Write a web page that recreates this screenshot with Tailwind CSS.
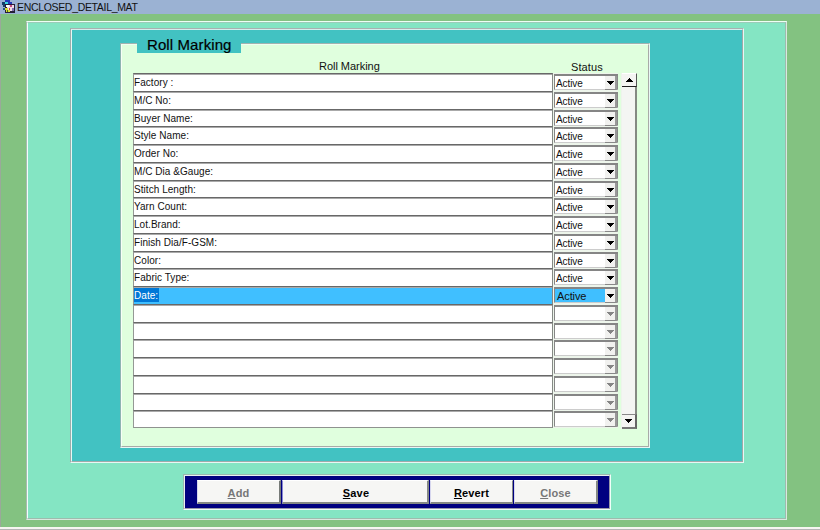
<!DOCTYPE html>
<html lang="en">
<head>
<meta charset="utf-8">
<title>ENCLOSED_DETAIL_MAT</title>
<script src="https://cdn.jsdelivr.net/npm/@tailwindcss/browser@4"></script>
</head>
<body class="w-[820px] h-[530px] overflow-hidden flex flex-col bg-[#f4f4f0] font-['Liberation_Sans',Arial,sans-serif] text-[#111]">
<header class="h-[14px] shrink-0 bg-[#9bb2d3] flex items-center">
  <svg class="w-[14px] h-[14px] ml-[2px] shrink-0" viewBox="0 0 14 14" shape-rendering="crispEdges">
    <path d="M3 0h5v2h2v2H3z" fill="#2438b8"/><path d="M0 2h3v5H1V5H0z" fill="#143c68"/><path d="M3 2h3v2H3z" fill="#38d8e0"/>
    <path d="M3 4h10v9H3z" fill="#251e37"/><path d="M5 5h7v6H5z" fill="#f0dce7"/>
    <path d="M4 5h3v2H4z" fill="#fff"/><path d="M8 5h2v2H8z" fill="#c14b83"/><path d="M10 8h2v3h-2z" fill="#8270b3"/>
    <path d="M3 8h3v2h2v2H4v-2H3z" fill="#d4df35"/><path d="M7 8h1v2H7z" fill="#d34437"/><path d="M1 8h2v2H1z" fill="#244f86"/><path d="M5 10h1v2H5z" fill="#4f681c"/>
  </svg>
  <span class="ml-[1px] text-[10.5px] leading-[14px] tracking-[-0.33px] whitespace-nowrap">ENCLOSED_DETAIL_MAT</span>
</header>
<main class="h-[513px] shrink-0 bg-[#83c281] border-l border-l-[#9aa99a] pl-[25px] pt-[7px]">
  <section class="w-[761px] h-[499px] border border-t-[#eefff5] border-l-[#a9b9b1] border-r-[#d9e8df] border-b-[#d9e8df]">
    <div class="h-full bg-[#84e5c3] border-l border-l-[#f2fff9] border-r border-r-[#9dbcae] border-b border-b-[#9dbcae] border-t border-t-[#9ccbb8] pl-[42px] pt-[5px]">
      <section class="w-[674px] h-[435px] border border-t-[#a9b1b0] border-l-[#9cacab] border-r-[#e8f8f4] border-b-[#e8f8f4]">
        <div class="h-full bg-[#42c2c2] border border-t-[#d5efed] border-l-[#e8f8f4] border-r-[#a1aaa9] border-b-[#a1aaa9] pl-[48px] pt-[6px]">
          <div class="h-[7px] relative z-10 pl-[17px]">
            <h1 class="w-[104px] h-[17px] bg-[#42c2c2] pl-[10px] text-[15px] leading-[18px] text-black tracking-[0.1px] whitespace-nowrap [-webkit-text-stroke:0.2px_black]">Roll Marking</h1>
          </div>
          <section class="w-[530px] h-[405px] border border-t-[#a2b2af] border-l-[#8eb5b1] border-r-[#e8f8f4] border-b-[#e8f8f4]">
            <div class="h-full bg-[#e0ffde] border border-t-[#effff0] border-l-[#f7fff7] border-r-[#a9aaa8] border-b-[#a9aaa8] pl-[11px]">
              <div class="h-[28px] flex pt-[15px] text-[11px] leading-[13px]">
                <div class="w-[420px] pl-[186px] tracking-[-0.03px] whitespace-nowrap">Roll Marking</div>
                <div class="pl-[18px] pt-px tracking-[0.1px]">Status</div>
              </div>
              <div class="flex h-[356px]">
                <div id="rows" class="w-[485px] shrink-0"></div>
                <div class="ml-[3px] w-[16px] h-[356px] flex flex-col bg-[#f4f5f3] border-r-2 border-r-[#858983] border-l border-l-[#eef3ec]">
                  <div class="h-[14px] mr-[-2px] bg-[#f4f4f2] border-t border-t-white border-b-[1px] border-b-[#202020] border-r border-r-[#555] flex items-center justify-center"><svg width="7" height="4" viewBox="0 0 7 4" shape-rendering="crispEdges"><path d="M3 0h1v1h1v1h1v1h1v1H0V3h1V2h1V1h1z"/></svg></div>
                  <div class="grow"></div>
                  <div class="h-[15px] mr-[-2px] bg-[#f4f4f2] border-t border-t-[#888] border-b-2 border-b-[#777] border-r-2 border-r-[#666] flex items-center justify-center"><svg width="7" height="4" viewBox="0 0 7 4" shape-rendering="crispEdges"><path d="M0 0h7v1H6v1H5v1H4v1H3V3H2V2H1V1H0z"/></svg></div>
                </div>
              </div>
            </div>
          </section>
        </div>
      </section>
      <nav class="ml-[113px] mt-[11px] w-[428px] h-[36px] border border-t-[#9ab8ae] border-l-[#9ab8ae] border-r-[#effff8] border-b-[#effff8]">
        <div class="h-full bg-[#000080] border border-t-[#e8f0f0] border-l-[#e8f0f0] border-r-[#9999a8] border-b-[#9999a8] pl-[12px] pt-[4px] flex text-[11px] font-bold leading-[23px] text-center tracking-[0.15px]">
          <button class="w-[84px] h-[24px] pt-px bg-[#f6f6f4] border border-t-white border-l-[#d6d6ee] border-r-2 border-r-[#777b78] border-b-2 border-b-[#858985] text-[#777]"><u class="underline-offset-1">A</u>dd</button>
          <button class="ml-[1px] w-[147px] h-[24px] pt-px bg-[#f6f6f4] border border-t-white border-l-[#8888d2] border-r-2 border-r-[#858985] border-b-2 border-b-[#858985] text-black pl-[2px]"><u class="underline-offset-1">S</u>ave</button>
          <button class="ml-[1px] w-[83px] h-[24px] pt-px bg-[#f6f6f4] border border-t-white border-l-[#d6d6ee] border-r-[#858985] border-b-2 border-b-[#858985] text-black"><u class="underline-offset-1">R</u>evert</button>
          <button class="ml-[1px] w-[84px] h-[24px] pt-px bg-[#f6f6f4] border border-t-white border-l-[#d6d6ee] border-r-2 border-r-[#858985] border-b-2 border-b-[#858985] text-[#777]"><u class="underline-offset-1">C</u>lose</button>
        </div>
      </nav>
    </div>
  </section>
</main>
<footer class="h-[3px] shrink-0 bg-[#f5f5f1] border-b border-b-[#b5b5b5]"></footer>
<script>
const labels = ["Factory :","M/C No:","Buyer Name:","Style Name:","Order No:","M/C Dia &amp;Gauge:","Stitch Length:","Yarn Count:","Lot.Brand:","Finish Dia/F-GSM:","Color:","Fabric Type:","Date:"];
const rowTop = i => Math.round(17.75 * i);
let html = "";
for (let i = 0; i < 20; i++) {
  const name = labels[i] || "";
  const current = i === 12;
  const tone = current ? "bg-[#40bfff]" : "bg-white";
  const text = current ? '<span class="inline-block h-[14px] bg-[#0078d7] text-white pr-px">' + name + '</span>' : name;
  const status = !name ? "" : current ? '<span class="text-[11px] tracking-[-0.1px] pl-px">Active</span>' : "Active";
  const arrow = name ? "fill-black" : "fill-[#858585]";
  const edge = i === 19 ? "border-b border-b-[#8f928f]" : "";
  html += `<div class="flex" style="height:${rowTop(i + 1) - rowTop(i)}px">
    <div class="w-[420px] h-full ${tone} ${edge} border-t border-t-[#686868] border-l border-l-[#959895] border-r border-r-[#858985] pt-px text-[10px] leading-[15px] tracking-[0.05px] whitespace-nowrap shadow-[0_1px_0_#aaaaaa_inset]">${text}</div>
    <div class="w-[65px] h-full pt-px pl-px bg-[#edf5eb]">
      <div class="h-[16px] ${tone} border-t-2 border-t-[#858585] border-l border-l-[#858585] border-r border-r-[#888] border-b border-b-[#ccc] flex">
        <span class="w-[50px] pl-px text-[10px] leading-[15px] tracking-[-0.1px]">${status}</span>
        <span class="grow h-[14px] bg-[#f1f1ef] border-r-2 border-r-[#999] border-b border-b-[#888] flex items-center justify-center pl-px"><svg class="${arrow}" width="7" height="4" viewBox="0 0 7 4" shape-rendering="crispEdges"><path d="M0 0h7v1H6v1H5v1H4v1H3V3H2V2H1V1H0z"/></svg></span>
      </div>
    </div>
  </div>`;
}
document.getElementById("rows").innerHTML = html;
</script>
</body>
</html>
